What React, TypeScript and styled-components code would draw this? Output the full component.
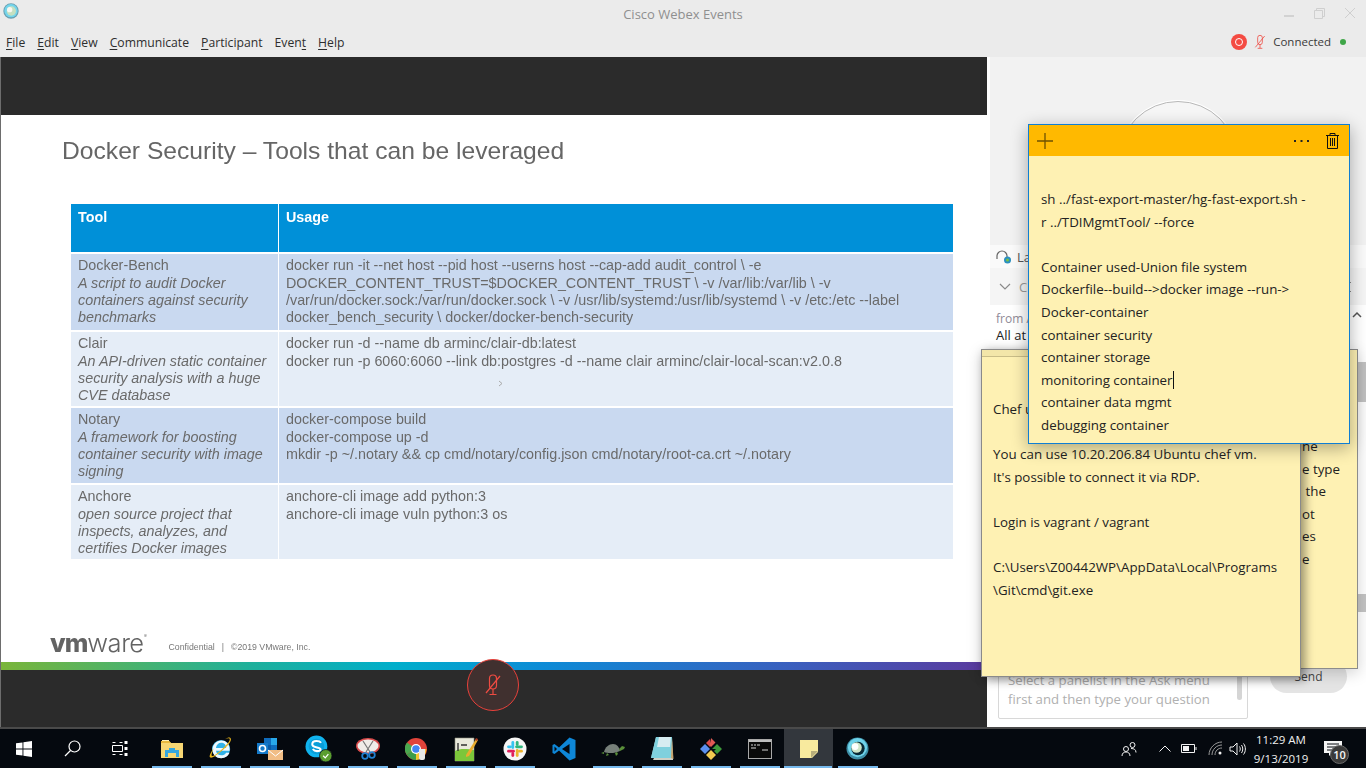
import React from 'react';
import styled, { createGlobalStyle } from 'styled-components';

const GlobalStyle = createGlobalStyle`
  html, body {
    margin: 0;
    padding: 0;
    width: 1366px;
    height: 768px;
    overflow: hidden;
    background: #f2f2f2;
  }
  * { box-sizing: border-box; }
`;

const Page = styled.div`
  position: relative;
  width: 1366px;
  height: 768px;
  overflow: hidden;
  display: flex;
  flex-direction: column;
  font-family: "Open Sans", "Noto Sans", sans-serif;
`;

const TitleBar = styled.div`
  height: 57px;
  flex: none;
  background: #ebebeb;
  display: grid;
  grid-template-rows: 29px 28px;
`;

const TitleRow = styled.div`
  position: relative;
  display: flex;
  align-items: center;
  justify-content: center;
  color: #8f8f8f;
  font-size: 13px;
  padding-bottom: 2px;
`;

const AppLogo = styled.svg`
  position: absolute;
  left: 3px;
  top: 3px;
`;

const WindowButtons = styled.div`
  position: absolute;
  right: 0;
  top: 0;
  display: flex;
  align-items: center;
  height: 26px;
  gap: 20px;
  padding-right: 11px;
`;

const MenuRow = styled.div`
  display: flex;
  align-items: center;
  justify-content: space-between;
  padding: 0 20px 2px 6px;
`;

const Menu = styled.div`
  display: flex;
  gap: 12px;
  font-size: 12.2px;
  color: #2e2e2e;
`;

const MenuItem = styled.span`
  u { text-underline-offset: 2px; }
`;

const Status = styled.div`
  display: flex;
  align-items: center;
  color: #3a3a3a;
  font-size: 11.5px;
`;

const StatusLabel = styled.span`
  margin: 0 0 2px 5px;
`;

const RecordDot = styled.span`
  width: 16px;
  height: 16px;
  border-radius: 50%;
  background: #f44b42;
  display: flex;
  align-items: center;
  justify-content: center;
  margin-right: 5px;
  &::after {
    content: '';
    width: 6px;
    height: 6px;
    border-radius: 50%;
    border: 1.5px solid #fff;
  }
`;

const GreenDot = styled.span`
  width: 6px;
  height: 6px;
  border-radius: 50%;
  background: #3fa648;
  margin-left: 9px;
`;

const Main = styled.div`
  flex: 1;
  display: flex;
  min-height: 0;
`;

const Stage = styled.div`
  position: relative;
  width: 987px;
  flex: none;
  display: flex;
  flex-direction: column;
  border-left: 1px solid #6d6d6d;
`;

const DarkBand = styled.div<{ $height: number }>`
  height: ${p => p.$height}px;
  flex: none;
  background: #2b2b2b;
`;

const Slide = styled.div`
  position: relative;
  flex: 1;
  background: #fff;
  padding: 20px 34px 0 61px;
  display: flex;
  flex-direction: column;
  font-family: "Liberation Sans", Arial, sans-serif;
  filter: blur(0.25px);
`;

const SlideTitle = styled.h1`
  margin: 0;
  font-size: 24.65px;
  line-height: 32px;
  font-weight: 400;
  color: #666;
`;

const ToolTable = styled.div`
  margin: 37px 0 0 9px;
  display: grid;
  grid-template-columns: 207px 674px;
  grid-template-rows: 48px 76px 74px 75px 74px;
  column-gap: 1px;
  row-gap: 2px;
  font-size: 14.33px;
  line-height: 17.35px;
  color: #6a6a6a;
`;

const HeadCell = styled.div`
  background: #0090d8;
  color: #fff;
  font-weight: 700;
  padding: 5px 7px;
`;

const Cell = styled.div<{ $dark: boolean }>`
  background: ${p => (p.$dark ? '#c9d9f0' : '#e5edf7')};
  padding: 3.3px 6px 0 7px;
  white-space: pre-line;
`;

const ToolNote = styled.em`
  font-style: italic;
`;

const SlideFooter = styled.div`
  margin: auto 0 7px -12px;
  display: flex;
  align-items: flex-end;
  color: #777;
`;

const VmLogo = styled.span`
  font-size: 25.5px;
  line-height: 24px;
  letter-spacing: -0.5px;
  color: #636363;
  font-family: Inter, "Liberation Sans", sans-serif;
  font-weight: 300;
  b { font-weight: 800; letter-spacing: -1px; }
  sup { font-size: 5px; vertical-align: 14px; }
`;

const FooterNote = styled.span`
  font-size: 8.75px;
  margin: 0 0 3px 22px;
  i { font-style: normal; margin: 0 7px; }
`;

const RainbowBar = styled.div`
  height: 8px;
  flex: none;
  background: linear-gradient(90deg, #7ab53a 0%, #1fb09a 25%, #00aecb 40%, #0d8bd6 55%, #3a5fbe 80%, #5b3a9e 100%);
`;

const MuteBadge = styled.div`
  position: absolute;
  left: 466px;
  top: 602px;
  width: 52px;
  height: 52px;
  border-radius: 50%;
  border: 1px solid #e8413b;
  background: #40302f;
  display: flex;
  align-items: center;
  justify-content: center;
`;

const SmallPointer = styled.svg`
  position: absolute;
  left: 497px;
  top: 265px;
`;

const SidePanel = styled.div`
  flex: 1;
  display: flex;
  flex-direction: column;
  background: #fff;
  padding-left: 3px;
  font-size: 13px;
  color: #333;
`;

const VideoArea = styled.div`
  height: 188px;
  flex: none;
  background: #f2f2f2;
  display: flex;
  justify-content: center;
  padding-top: 44px;
  overflow: hidden;
`;

const Avatar = styled.div`
  width: 120px;
  height: 120px;
  border-radius: 50%;
  background: #f6f6f6;
  border: 1px solid #b8b8b8;
  box-shadow: 0 0 0 1px #fff;
`;

const PresenterRow = styled.div`
  height: 23px;
  flex: none;
  background: #fafafa;
  display: flex;
  align-items: center;
  gap: 4px;
  padding-left: 5px;
  color: #555;
`;

const ChatHeader = styled.div`
  height: 37px;
  flex: none;
  background: #f5f5f5;
  display: flex;
  align-items: center;
  justify-content: space-between;
  padding: 0 14px 0 9px;
  color: #9a9a9a;
`;

const ChatName = styled.div`
  display: flex;
  align-items: center;
  gap: 8px;
`;

const ChatBody = styled.div`
  flex: 1;
  padding: 3px 5px 0 6px;
  display: flex;
  flex-direction: column;
  position: relative;
`;

const ChatFrom = styled.div`
  font-size: 12px;
  line-height: 17px;
  color: #8f8a96;
  margin-top: 2px;
`;

const ChatLine = styled.div`
  font-size: 13px;
  line-height: 17px;
  color: #222;
`;

const ScrollArrow = styled.svg`
  position: absolute;
  right: 4px;
  top: 6px;
`;

const ScrollThumb = styled.div<{ $top: number; $height: number }>`
  position: absolute;
  right: 0;
  top: ${p => p.$top}px;
  width: 8px;
  height: ${p => p.$height}px;
  background: #c4c4c4;
`;

const AskRow = styled.div`
  height: 68px;
  flex: none;
  background: #fff;
  padding: 0 19px 8px 8px;
  display: flex;
  align-items: flex-start;
  justify-content: space-between;
`;

const AskBox = styled.div`
  position: relative;
  width: 250px;
  height: 60px;
  border: 1px solid #d8d8d8;
  border-radius: 2px;
  padding: 11px 9px 0;
  font-size: 13.2px;
  line-height: 19px;
  color: #b0b0b0;
`;

const AskThumb = styled.span`
  position: absolute;
  right: 5px;
  top: 4px;
  width: 5px;
  height: 36px;
  border-radius: 3px;
  background: #d5d5d5;
`;

const SendButton = styled.div`
  width: 77px;
  height: 33px;
  margin-top: 1px;
  border-radius: 17px;
  background: #e4e4e4;
  font-size: 12px;
  line-height: 33px;
  text-align: center;
  color: #444;
`;

const Note = styled.div<{ $left: number; $top: number; $width: number; $height: number }>`
  position: absolute;
  left: ${p => p.$left}px;
  top: ${p => p.$top}px;
  width: ${p => p.$width}px;
  height: ${p => p.$height}px;
  background: #fef1b3;
  color: #222;
  font-size: 13.33px;
  line-height: 22.6px;
  overflow: hidden;
`;

const BackNote = styled(Note)`
  border: 1px solid #8c8c8c;
  box-shadow: 0 4px 14px rgba(0, 0, 0, 0.18);
  padding: 85px 0 0 320px;
`;

const FrontNote = styled(Note)`
  border: 1px solid #8a8a8a;
  box-shadow: 4px 3px 9px rgba(0, 0, 0, 0.4);
  padding: 48px 8px 0 11px;
`;

const NoteStrip = styled.div`
  position: absolute;
  left: 0;
  right: 0;
  top: 0;
  height: 7px;
  background: #f3e6a9;
  border-bottom: 1px solid #c9bd88;
`;

const ActiveNote = styled(Note)`
  border: 1px solid #0f7ed4;
  box-shadow: 0 4px 16px rgba(0, 0, 0, 0.32);
  overflow: visible;
  display: flex;
  flex-direction: column;
`;

const NoteHeader = styled.div`
  height: 31px;
  flex: none;
  background: #ffb900;
  display: flex;
  align-items: center;
  justify-content: space-between;
  padding: 0 10px 0 8px;
`;

const NoteTools = styled.div`
  display: flex;
  align-items: center;
  gap: 17px;
`;

const NoteBody = styled.div`
  padding: 32px 12px 0;
`;

const NoteLine = styled.div`
  min-height: 22.6px;
  white-space: pre;
`;

const Caret = styled.span`
  display: inline-block;
  width: 1px;
  height: 18px;
  background: #111;
  vertical-align: -4px;
  margin: 0 -1px 0 0;
`;

const Taskbar = styled.div`
  height: 41px;
  flex: none;
  background: #05090f;
  border-top: 2px solid #4a4a4a;
  display: flex;
  align-items: stretch;
  color: #f2f2f2;
`;

const ShellButton = styled.div`
  width: 48px;
  display: flex;
  align-items: center;
  justify-content: center;
`;

const AppList = styled.div`
  display: flex;
  margin-left: 3px;
`;

const AppSlot = styled.div<{ $open: boolean; $active: boolean }>`
  position: relative;
  width: 49px;
  display: flex;
  align-items: center;
  justify-content: center;
  background: ${p => (p.$active ? '#33373d' : 'transparent')};
  &::after {
    content: '';
    display: ${p => (p.$open ? 'block' : 'none')};
    position: absolute;
    bottom: 0;
    left: ${p => (p.$active ? '0' : '4.5px')};
    right: ${p => (p.$active ? '1px' : '4.5px')};
    height: 2px;
    background: #76b9ed;
  }
`;

const Tray = styled.div`
  margin-left: auto;
  display: flex;
  align-items: center;
`;

const TrayIcon = styled.div<{ $width: number }>`
  width: ${p => p.$width}px;
  display: flex;
  align-items: center;
  justify-content: center;
`;

const Clock = styled.div`
  width: 62px;
  text-align: center;
  font-size: 11.5px;
  line-height: 19px;
  white-space: nowrap;
  color: #f0f0f0;
  font-family: "Open Sans", sans-serif;
`;

const NotifyButton = styled.div`
  position: relative;
  width: 54px;
  display: flex;
  align-items: center;
  justify-content: center;
  padding-right: 12px;
`;

const NotifyCount = styled.span`
  position: absolute;
  left: 18px;
  top: 4px;
  width: 19px;
  height: 19px;
  border-radius: 50%;
  background: #3a3a3a;
  border: 1px solid #6a6a6a;
  font-size: 11px;
  font-weight: 600;
  line-height: 17px;
  text-align: center;
  color: #f5f5f5;
`;

const WebexGlyph: React.FC<{ size: number }> = ({ size }) => (
  <svg width={size} height={size} viewBox="0 0 24 24">
    <circle cx="12" cy="12" r="11.5" fill="#3d8ea6" />
    <circle cx="12" cy="11" r="10" fill="#6fd3ea" />
    <circle cx="12.5" cy="12" r="7" fill="#0a2a36" />
    <circle cx="11" cy="11" r="5.5" fill="#cfe6c8" />
    <circle cx="9.500" cy="10" r="3.500" fill="#fff" />
  </svg>
);

const MutedMic: React.FC<{ size: number }> = ({ size }) => (
  <svg width={size} height={size} viewBox="0 0 24 24" fill="none" stroke="#ee4b42" strokeWidth="1.2">
    <rect x="8.5" y="2" width="7" height="14" rx="3.5" />
    <path d="M12 16v5M8.5 21.5h7M5 20L19 3" />
  </svg>
);

const FolderIcon = () => (
  <svg width="22" height="20" viewBox="0 0 22 20">
    <path d="M0 2h8l2 2h12v15H0z" fill="#f7d774" />
    <path d="M0 2h8l2 2H0z" fill="#e8b93e" />
    <path d="M1 1h7v1H1z" fill="#fff2b8" />
    <path d="M4 18v-7h4V9h6v2h4v7h-3v-4H7v4z" fill="#35a6df" />
  </svg>
);

const IeIcon = () => (
  <svg width="25" height="25" viewBox="0 0 22 22">
    <circle cx="11.5" cy="11.5" r="8" fill="#2fb2e8" />
    <path d="M7 10.500h9c0-3-2-4.500-4.400-4.500S7.400 7.800 7 10.500zM7 13c.4 2.600 2.300 4 4.700 4 1.800 0 3.300-.8 4.200-2.300h3.100C17.800 17.800 15 19.500 11.700 19.500 7.500 19.500 4 16.500 4 12s3.500-8 7.700-8c4.300 0 7.300 3 7.300 8v1z" fill="#fff" opacity="0.92" />
    <path d="M19.500 1.500C21.500 3 19 7 14 11.500S4 19.800 2 19c-1.500-.7.500-5 3-8-1.500 3.500-2.300 6-1.500 6.500 1.200.7 5-2.300 9-6S20 4 19 2.500c-.5-.7-2-.5-4 .3 2-1.400 3.500-1.900 4.500-1.300z" fill="#e7b41c" />
  </svg>
);

const OutlookIcon = () => (
  <svg width="26" height="24" viewBox="0 0 26 24">
    <path d="M7 1h13v15H7z" fill="#0f6cbd" />
    <path d="M14 1h6v7h-6z" fill="#28a8ea" />
    <path d="M7 8h7v8H7z" fill="#0a5aa6" />
    <path d="M0 6h11v11H0z" fill="#1479c9" />
    <circle cx="5.500" cy="11.500" r="3" fill="none" stroke="#fff" strokeWidth="1.600" />
    <path d="M11 13h15v10H11z" fill="#f1bd85" />
    <path d="M11 13l7.500 6 7.500-6" fill="none" stroke="#fff" strokeWidth="1" />
  </svg>
);

const SkypeIcon = () => (
  <svg width="27" height="27" viewBox="0 0 26 26">
    <circle cx="11" cy="11" r="10.500" fill="#10b3ee" />
    <circle cx="11" cy="11" r="7.500" fill="#0a9ed8" />
    <path d="M15.500 7.500C14.500 6 12.800 5.800 11 5.800 8.800 5.800 7 7 7 8.900c0 4 8 2.300 8 5 0 1-1.300 1.600-3.500 1.600-1.800 0-3-.6-4-2" fill="none" stroke="#fff" strokeWidth="2" />
    <circle cx="20" cy="20" r="6" fill="#5a9e2f" stroke="#10151c" strokeWidth="0.800" />
    <path d="M17.500 20l2 2 3-3.500" fill="none" stroke="#fff" strokeWidth="1.200" />
  </svg>
);

const SnipIcon = () => (
  <svg width="26" height="24" viewBox="0 0 26 24">
    <ellipse cx="13" cy="9" rx="12" ry="8" fill="#d94a4a" />
    <ellipse cx="13" cy="9" rx="10.500" ry="6.500" fill="#f0ece8" />
    <path d="M8 4l7 11M18 4l-7 11" stroke="#777" strokeWidth="1.200" />
    <circle cx="17" cy="18" r="2.800" fill="none" stroke="#1f7fd0" strokeWidth="1.800" />
    <circle cx="10" cy="19" r="2.800" fill="none" stroke="#1f7fd0" strokeWidth="1.800" />
  </svg>
);

const ChromeIcon = () => (
  <svg width="24" height="24" viewBox="0 0 24 24">
    <circle cx="11" cy="12" r="11" fill="#e0433a" />
    <path d="M11 12L1.500 17.500A11 11 0 0 1 2 5.500z" fill="#4aa84f" />
    <path d="M11 12l-9.500 5.500A11 11 0 0 0 14 22.500z" fill="#3c9d49" />
    <path d="M11 12h10.500A11 11 0 0 1 11 23z" fill="#f5c531" />
    <circle cx="11" cy="12" r="5" fill="#fff" />
    <circle cx="11" cy="12" r="3.800" fill="#4285f4" />
    <path d="M14 12h6v9a2 2 0 0 1-2 2h-2a2 2 0 0 1-2-2z" fill="#e8e8e8" />
  </svg>
);

const NotepadPlusIcon = () => (
  <svg width="24" height="26" viewBox="0 0 24 26">
    <path d="M1 2h19v23H1z" fill="#e9e9dc" stroke="#8d8d7e" strokeWidth="0.600" />
    <path d="M1 15c5-3 13-2 19-1v11H1z" fill="#7cc63a" />
    <path d="M4 7v8M7 9h6" stroke="#333" strokeWidth="1.400" />
    <path d="M12 19L22 3l2 1-9 16-3 1z" fill="#e9ac2e" />
    <path d="M22 2l2 1-1 2-2-1z" fill="#a83b22" />
  </svg>
);

const SlackIcon = () => (
  <svg width="24" height="24" viewBox="0 0 24 24">
    <circle cx="12" cy="12" r="11.500" fill="#f6f6f6" />
    <g strokeWidth="2.800" strokeLinecap="round">
      <path d="M9.800 5.500v5" stroke="#36c5f0" />
      <path d="M5.500 9.800h2" stroke="#36c5f0" />
      <path d="M18.500 9.800h-5" stroke="#2eb67d" />
      <path d="M14.200 5.500v2" stroke="#2eb67d" />
      <path d="M14.200 18.500v-5" stroke="#ecb22e" />
      <path d="M18.500 14.200h-2" stroke="#ecb22e" />
      <path d="M5.500 14.200h5" stroke="#e01e5a" />
      <path d="M9.800 18.500v-2" stroke="#e01e5a" />
    </g>
  </svg>
);

const VsCodeIcon = () => (
  <svg width="24" height="24" viewBox="0 0 24 24">
    <path d="M17.500 0.500L23.500 3v18l-6 2.500L7 13.500 2.500 17 0.500 16V8l2-1L7 10.500z" fill="#0e87d8" />
    <path d="M17.500 7L10 12l7.500 5z" fill="#05090f" />
    <path d="M2.500 9.500L5 12l-2.500 2.500z" fill="#05090f" />
  </svg>
);

const TurtleIcon = () => (
  <svg width="24" height="16" viewBox="0 0 24 16">
    <path d="M3 11c1-5 5-8 9-8s6 3 7 7c-4 2-11 3-16 1z" fill="#77807a" />
    <path d="M18 8l3-3 3 1-1 2-4 2zM3 11l-3 1 3 1zM6 12l-1 3 3-1zM14 12l1 3 2-2-1-2z" fill="#5a8f3a" />
  </svg>
);

const NotepadIcon = () => (
  <svg width="24" height="26" viewBox="0 0 24 26">
    <path d="M6 1h16l1 21H1z" fill="#a9c4cc" />
    <path d="M6 1h16l-1 21H1z" fill="#7fd0dd" />
    <path d="M4 22h19v2H3z" fill="#cfcfc4" />
    <path d="M9 1h12l-1 10H7z" fill="#d7ecf1" />
    <path d="M21 22l1-20 1.500 21z" fill="#c7a56e" />
  </svg>
);

const GitKrakenIcon = () => (
  <svg width="24" height="24" viewBox="0 0 24 24">
    <path d="M12 1l4.500 4.500-4.500 4.500-1.500-1.500 1.500-7z" fill="#e05a54" />
    <path d="M11 2L7 6l4 4z" fill="#d94b4b" />
    <path d="M6 7l5 5-5 5-5-5z" fill="#5b8fee" />
    <path d="M18 7l5 5-5 5-3-3 2-2-4 0z" fill="#3d9a3a" />
    <path d="M12 13l5 5-5 5-5-5z" fill="#f1c950" />
  </svg>
);

const ConsoleIcon = () => (
  <svg width="24" height="20" viewBox="0 0 24 20">
    <rect x="0.500" y="0.500" width="23" height="19" fill="#0a0a0a" stroke="#a8a8a8" />
    <path d="M1 1h22v2H1z" fill="#bfbfbf" />
    <path d="M3 6h2M6 6h2M9 6h3M3 9h5M14 11h6" stroke="#d5d5d5" strokeWidth="1.200" />
  </svg>
);

const StickyIcon = () => (
  <svg width="20" height="20" viewBox="0 0 20 20">
    <path d="M1 1h18v12l-6 6H1z" fill="#f8ea9e" />
    <path d="M19 12h-7v7z" fill="#b8ae7b" />
  </svg>
);

const apps = [
  { key: 'folder', open: true, icon: <FolderIcon /> },
  { key: 'ie', open: true, icon: <IeIcon /> },
  { key: 'outlook', open: true, icon: <OutlookIcon /> },
  { key: 'skype', open: true, icon: <SkypeIcon /> },
  { key: 'snip', open: true, icon: <SnipIcon /> },
  { key: 'chrome', open: true, icon: <ChromeIcon /> },
  { key: 'notepadplus', open: true, icon: <NotepadPlusIcon /> },
  { key: 'slack', open: true, icon: <SlackIcon /> },
  { key: 'vscode', open: false, icon: <VsCodeIcon /> },
  { key: 'turtle', open: true, icon: <TurtleIcon /> },
  { key: 'notepad', open: true, icon: <NotepadIcon /> },
  { key: 'gitkraken', open: true, icon: <GitKrakenIcon /> },
  { key: 'console', open: true, icon: <ConsoleIcon /> },
  { key: 'sticky', open: true, active: true, icon: <StickyIcon /> },
  { key: 'webex', open: true, icon: <WebexGlyph size={23} /> },
];

const menuItems = [
  ['F', 'ile'],
  ['E', 'dit'],
  ['V', 'iew'],
  ['C', 'ommunicate'],
  ['P', 'articipant'],
  ['Even', 't', ''],
  ['H', 'elp'],
];

const rows = [
  {
    name: 'Docker-Bench',
    note: 'A script to audit Docker\ncontainers against security\nbenchmarks',
    usage:
      'docker run -it --net host --pid host --userns host --cap-add audit_control \\ -e\nDOCKER_CONTENT_TRUST=$DOCKER_CONTENT_TRUST \\ -v /var/lib:/var/lib \\ -v\n/var/run/docker.sock:/var/run/docker.sock \\ -v /usr/lib/systemd:/usr/lib/systemd \\ -v /etc:/etc --label\ndocker_bench_security \\ docker/docker-bench-security',
  },
  {
    name: 'Clair',
    note: 'An API-driven static container\nsecurity analysis with a huge\nCVE database',
    usage:
      'docker run -d --name db arminc/clair-db:latest\ndocker run -p 6060:6060 --link db:postgres -d --name clair arminc/clair-local-scan:v2.0.8',
  },
  {
    name: 'Notary',
    note: 'A framework for boosting\ncontainer security with image\nsigning',
    usage:
      'docker-compose build\ndocker-compose up -d\nmkdir -p ~/.notary && cp cmd/notary/config.json cmd/notary/root-ca.crt ~/.notary',
  },
  {
    name: 'Anchore',
    note: 'open source project that\ninspects, analyzes, and\ncertifies Docker images',
    usage: 'anchore-cli image add python:3\nanchore-cli image vuln python:3 os',
  },
];

const backLines = ['ne', 'e type', ' the', 'ot', 'es', 'e'];

const frontLines = [
  'Chef u',
  '',
  'You can use 10.20.206.84 Ubuntu chef vm.',
  "It's possible to connect it via RDP.",
  '',
  'Login is vagrant / vagrant',
  '',
  'C:\\Users\\Z00442WP\\AppData\\Local\\Programs',
  '\\Git\\cmd\\git.exe',
];

const activeLines = [
  'sh ../fast-export-master/hg-fast-export.sh -',
  'r ../TDIMgmtTool/ --force',
  '',
  'Container used-Union file system',
  'Dockerfile--build-->docker image --run->',
  'Docker-container',
  'container security',
  'container storage',
];

const App: React.FC = () => (
  <Page>
    <GlobalStyle />
    <TitleBar>
      <TitleRow>
        <AppLogo width="16" height="16" viewBox="0 0 24 24">
          <circle cx="12" cy="12" r="11.5" fill="#6a9fb0" />
          <circle cx="12" cy="11.500" r="10" fill="#74d5ec" />
          <circle cx="12.500" cy="12" r="7" fill="#c5e0c0" />
          <circle cx="10" cy="10" r="4" fill="#f7f7f2" />
        </AppLogo>
        Cisco Webex Events
        <WindowButtons>
          <svg width="10" height="10" viewBox="0 0 10 10">
            <path d="M0 8h10" stroke="#d2d2d2" strokeWidth="2" />
          </svg>
          <svg width="11" height="11" viewBox="0 0 11 11" fill="none" stroke="#cfcfcf">
            <path d="M.5 2.500h8v8h-8zM2.500 2.500v-2h8v8h-2" />
          </svg>
          <svg width="10" height="10" viewBox="0 0 10 10">
            <path d="M0 0l10 10M10 0L0 10" stroke="#cfcfcf" />
          </svg>
        </WindowButtons>
      </TitleRow>
      <MenuRow>
        <Menu>
          {menuItems.map(([first, second, third]) => (
            <MenuItem key={first + second}>
              {third === undefined ? (
                <>
                  <u>{first}</u>
                  {second}
                </>
              ) : (
                <>
                  {first}
                  <u>{second}</u>
                </>
              )}
            </MenuItem>
          ))}
        </Menu>
        <Status>
          <RecordDot />
          <MutedMic size={16} />
          <StatusLabel>Connected</StatusLabel>
          <GreenDot />
        </Status>
      </MenuRow>
    </TitleBar>
    <Main>
      <Stage>
        <DarkBand $height={58} />
        <Slide>
          <SlideTitle>Docker Security – Tools that can be leveraged</SlideTitle>
          <ToolTable>
            <HeadCell>Tool</HeadCell>
            <HeadCell>Usage</HeadCell>
            {rows.map((row, index) => (
              <React.Fragment key={row.name}>
                <Cell $dark={index % 2 === 0}>
                  {row.name}
                  {'\n'}
                  <ToolNote>{row.note}</ToolNote>
                </Cell>
                <Cell $dark={index % 2 === 0}>{row.usage}</Cell>
              </React.Fragment>
            ))}
          </ToolTable>
          <SlideFooter>
            <VmLogo>
              <b>vm</b>ware<sup>®</sup>
            </VmLogo>
            <FooterNote>
              Confidential<i>|</i>©2019 VMware, Inc.
            </FooterNote>
          </SlideFooter>
          <SmallPointer width="5" height="7" viewBox="0 0 5 7">
            <path d="M1 1l3 2.500L1 6" fill="none" stroke="#aaa" />
          </SmallPointer>
        </Slide>
        <RainbowBar />
        <DarkBand $height={57} />
        <MuteBadge>
          <MutedMic size={24} />
        </MuteBadge>
      </Stage>
      <SidePanel>
        <VideoArea>
          <Avatar />
        </VideoArea>
        <PresenterRow>
          <svg width="18" height="16" viewBox="0 0 18 16" fill="none">
            <path d="M2 10V7a5 5 0 0 1 10 0v3" stroke="#666" strokeWidth="1.200" />
            <circle cx="12.500" cy="11" r="3.500" fill="#2a8fc0" />
            <circle cx="12.500" cy="11" r="1.500" fill="#7ac142" />
          </svg>
          La
        </PresenterRow>
        <ChatHeader>
          <ChatName>
            <svg width="12" height="8" viewBox="0 0 12 8" fill="none">
              <path d="M1 1l5 5 5-5" stroke="#8a8a8a" strokeWidth="1.200" />
            </svg>
            Ch
          </ChatName>
          <svg width="7" height="12" viewBox="0 0 7 12" fill="none">
            <path d="M6 1L1 6l5 5" stroke="#8a8a8a" />
          </svg>
        </ChatHeader>
        <ChatBody>
          <ChatFrom>from A</ChatFrom>
          <ChatLine>All at</ChatLine>
          <ScrollArrow width="10" height="7" viewBox="0 0 10 7" fill="none">
            <path d="M1 6l4-4 4 4" stroke="#555" strokeWidth="1.500" />
          </ScrollArrow>
          <ScrollThumb $top={57} $height={40} />
          <ScrollThumb $top={289} $height={18} />
        </ChatBody>
        <AskRow>
          <AskBox>
            Select a panelist in the Ask menu
            <br />
            first and then type your question
            <AskThumb />
          </AskBox>
          <SendButton>Send</SendButton>
        </AskRow>
      </SidePanel>
    </Main>
    <Taskbar>
      <ShellButton>
        <svg width="16" height="16" viewBox="0 0 16 16" fill="#fff">
          <path d="M0 2.300L6.500 1.400V7.500H0zM7.400 1.300L16 0V7.500H7.400zM0 8.400H6.500V14.600L0 13.700zM7.400 8.400H16V16L7.400 14.800z" />
        </svg>
      </ShellButton>
      <ShellButton>
        <svg width="17" height="17" viewBox="0 0 17 17" fill="none" stroke="#fff" strokeWidth="1.200">
          <circle cx="10.500" cy="6.500" r="5.500" />
          <path d="M6.500 10.500L1 16" />
        </svg>
      </ShellButton>
      <ShellButton>
        <svg width="17" height="15" viewBox="0 0 17 15" fill="none" stroke="#fff">
          <path d="M.5 4.500h10v6H.5zM.5 1.500h3M7.500 1.500h3M.5 13.500h3M7.500 13.500h3" />
          <path d="M14 0v3M14 6v3M14 12v3" strokeWidth="3" />
        </svg>
      </ShellButton>
      <AppList>
        {apps.map(app => (
          <AppSlot key={app.key} $open={app.open} $active={!!app.active}>
            {app.icon}
          </AppSlot>
        ))}
      </AppList>
      <Tray>
        <TrayIcon $width={58}>
          <svg width="16" height="16" viewBox="0 0 16 16" fill="none" stroke="#f2f2f2">
            <circle cx="5" cy="8" r="2.500" />
            <path d="M1 15c0-3 2-4 4-4s4 1 4 4" />
            <circle cx="11.500" cy="4" r="2.500" />
            <path d="M10 7.500c3 0 5 1 5 4" />
          </svg>
        </TrayIcon>
        <TrayIcon $width={14}>
          <svg width="12" height="7" viewBox="0 0 12 7" fill="none" stroke="#f2f2f2">
            <path d="M.5 6.500L6 1l5.500 5.500" />
          </svg>
        </TrayIcon>
        <TrayIcon $width={34}>
          <svg width="16" height="9" viewBox="0 0 16 9">
            <path d="M.5.500h13v8H.5z" fill="none" stroke="#f2f2f2" />
            <path d="M2 2h6v5H2z" fill="#f2f2f2" />
            <path d="M14.500 3h1v3h-1z" fill="#f2f2f2" />
          </svg>
        </TrayIcon>
        <TrayIcon $width={18}>
          <svg width="15" height="15" viewBox="0 0 15 15" fill="none" stroke="#9a9a9a">
            <path d="M1 14C1 7 7 1 14 1M4 14c0-5.500 4.500-10 10-10M7 14c0-4 3-7 7-7" />
            <circle cx="12" cy="12" r="1.500" fill="#f2f2f2" stroke="none" />
          </svg>
        </TrayIcon>
        <TrayIcon $width={26}>
          <svg width="17" height="14" viewBox="0 0 17 14" fill="none" stroke="#f2f2f2">
            <path d="M1 5h3l4-4v12L4 9H1zM10.500 4.500c1 1.500 1 3.500 0 5M12.500 3c1.700 2.300 1.700 5.700 0 8M14.500 1.500c2.500 3 2.500 8 0 11" />
          </svg>
        </TrayIcon>
        <Clock>
          11:29 AM
          <br />
          9/13/2019
        </Clock>
        <NotifyButton>
          <svg width="18" height="16" viewBox="0 0 18 16">
            <path d="M0 0h18v12H8l-3 3v-3H0z" fill="#f5f5f5" />
            <path d="M3 3h12M3 6h12M3 9h8" stroke="#05090f" />
          </svg>
          <NotifyCount>10</NotifyCount>
        </NotifyButton>
      </Tray>
    </Taskbar>
    <BackNote $left={981} $top={349} $width={377} $height={320}>
      {backLines.map(text => (
        <NoteLine key={text}>{text}</NoteLine>
      ))}
    </BackNote>
    <FrontNote $left={981} $top={349} $width={320} $height={328}>
      <NoteStrip />
      {frontLines.map((line, index) => (
        <NoteLine key={index}>{line}</NoteLine>
      ))}
    </FrontNote>
    <ActiveNote $left={1028} $top={124} $width={322} $height={320}>
      <NoteHeader>
        <svg width="16" height="16" viewBox="0 0 16 16">
          <path d="M8 0v16M0 8h16" stroke="#6f5200" strokeWidth="1.300" />
        </svg>
        <NoteTools>
          <svg width="15" height="3" viewBox="0 0 15 3" fill="#222">
            <path d="M0 1h2v2H0zM6.500 1h2v2h-2zM13 1h2v2h-2z" />
          </svg>
          <svg width="13" height="16" viewBox="0 0 13 16" fill="none" stroke="#111">
            <path d="M0 2.500h13M4 2.500V.5h5v2M1.500 2.500v13h10v-13M4.500 5v8M6.500 5v8M8.500 5v8" />
          </svg>
        </NoteTools>
      </NoteHeader>
      <NoteBody>
        {activeLines.map((line, index) => (
          <NoteLine key={index}>{line}</NoteLine>
        ))}
        <NoteLine>
          monitoring container
          <Caret />
        </NoteLine>
        <NoteLine>container data mgmt</NoteLine>
        <NoteLine>debugging container</NoteLine>
      </NoteBody>
    </ActiveNote>
  </Page>
);

export default App;
